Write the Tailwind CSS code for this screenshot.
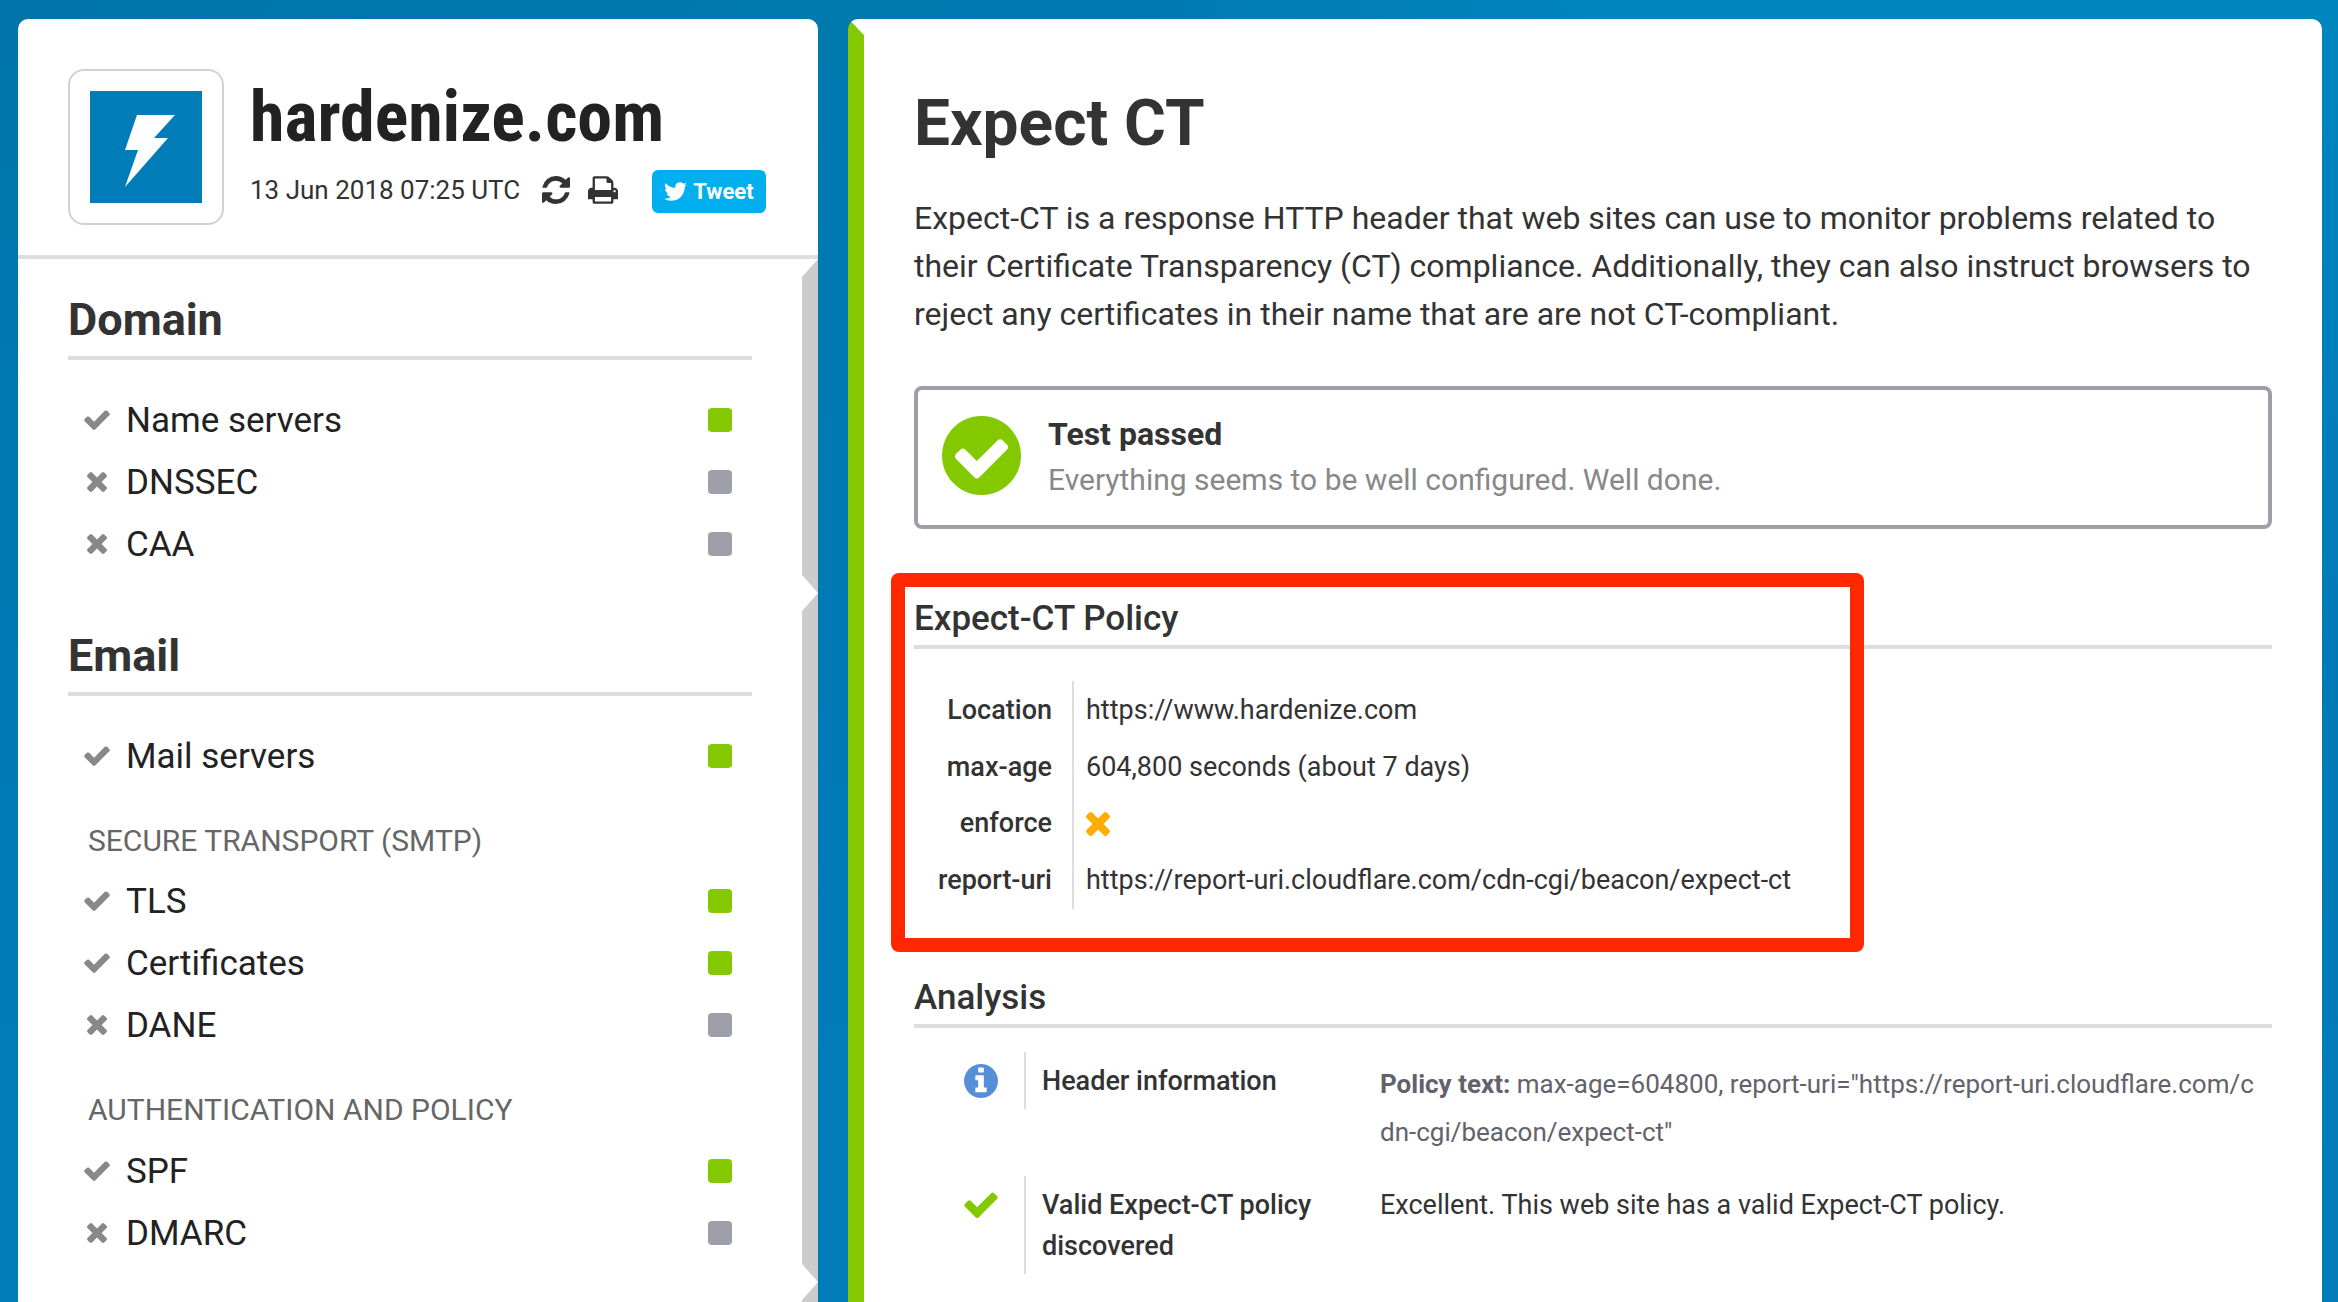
<!DOCTYPE html>
<html lang="en">
<head>
    <meta charset="UTF-8">
    <meta name="viewport" content="width=device-width, initial-scale=1.0">
    <title>hardenize.com - Expect CT</title>
    <script src="https://cdn.jsdelivr.net/npm/@tailwindcss/browser@4"></script>
</head>
<body class="bg-[#007cb8] bg-linear-to-r from-[#0074aa] via-[#007bb1] to-[#0086be] to-70% font-[Roboto,sans-serif] text-[#333]">
    <!-- icon set -->
    <svg class="hidden" aria-hidden="true">
        <symbol id="check" viewBox="121 309 1550 1213"><path d="M1671 566q0 40-28 68l-724 724-136 136q-28 28-68 28t-68-28l-136-136-362-362q-28-28-28-68t28-68l136-136q28-28 68-28t68 28l294 295 656-657q28-28 68-28t68 28l136 136q28 28 28 68z"/></symbol>
        <symbol id="times" viewBox="302 366 1188 1188"><path d="M1490 1322q0 40-28 68l-136 136q-28 28-68 28t-68-28l-294-294-294 294q-28 28-68 28t-68-28l-136-136q-28-28-28-68t28-68l294-294-294-294q-28-28-28-68t28-68l136-136q28-28 68-28t68 28l294 294 294-294q28-28 68-28t68 28l136 136q28 28 28 68t-28 68l-294 294 294 294q28 28 28 68z"/></symbol>
        <symbol id="check-circle" viewBox="128 128 1536 1536"><path d="M1412 734q0-28-18-46l-91-90q-19-19-45-19t-45 19l-408 407-226-226q-19-19-45-19t-45 19l-91 90q-18 18-18 46 0 27 18 45l362 362q19 19 45 19 27 0 46-19l543-543q18-18 18-45zm252 162q0 209-103 385.5t-279.5 279.5-385.5 103-385.5-103-279.5-279.5-103-385.5 103-385.5 279.5-279.5 385.5-103 385.5 103 279.5 279.5 103 385.5z"/></symbol>
        <symbol id="info" viewBox="128 128 1536 1536"><path d="M1152 1376v-160q0-14-9-23t-23-9h-96v-512q0-14-9-23t-23-9h-320q-14 0-23 9t-9 23v160q0 14 9 23t23 9h96v320h-96q-14 0-23 9t-9 23v160q0 14 9 23t23 9h448q14 0 23-9t9-23zm-128-896v-160q0-14-9-23t-23-9h-192q-14 0-23 9t-9 23v160q0 14 9 23t23 9h192q14 0 23-9t9-23zm640 416q0 209-103 385.5t-279.5 279.5-385.5 103-385.5-103-279.5-279.5-103-385.5 103-385.5 279.5-279.5 385.5-103 385.5 103 279.5 279.5 103 385.5z"/></symbol>
        <symbol id="refresh" viewBox="128 128 1536 1536"><path d="M1639 1056q0 5-1 7-64 268-268 434.5t-478 166.5q-146 0-282.5-55t-243.5-157l-129 129q-19 19-45 19t-45-19-19-45v-448q0-26 19-45t45-19h448q26 0 45 19t19 45-19 45l-137 137q71 66 161 102t187 36q134 0 250-65t186-179q11-17 53-117 8-23 30-23h192q13 0 22.5 9.5t9.5 22.5zm25-800v448q0 26-19 45t-45 19h-448q-26 0-45-19t-19-45 19-45l138-138q-148-137-349-137-134 0-250 65t-186 179q-11 17-53 117-8 23-30 23h-199q-13 0-22.5-9.5t-9.5-22.5v-7q65-268 270-434.5t480-166.5q146 0 284 55.5t245 156.5l130-129q19-19 45-19t45 19 19 45z"/></symbol>
        <symbol id="print" viewBox="64 128 1664 1536"><path d="M448 1536h896v-256h-896v256zm0-640h896v-384h-160q-40 0-68-28t-28-68v-160h-640v640zm1152 64q0-26-19-45t-45-19-45 19-19 45 19 45 45 19 45-19 19-45zm128 0v416q0 13-9.5 22.5t-22.5 9.5h-224v160q0 40-28 68t-68 28h-960q-40 0-68-28t-28-68v-160h-224q-13 0-22.5-9.5t-9.5-22.5v-416q0-79 56.5-135.5t135.5-56.5h64v-544q0-40 28-68t68-28h672q40 0 88 20t76 48l152 152q28 28 48 76t20 88v256h64q79 0 135.5 56.5t56.5 135.5z"/></symbol>
        <symbol id="twitter" viewBox="108 256 1576 1280"><path d="M1684 408q-67 98-162 167 1 14 1 42 0 130-38 259.5t-115.5 248.5-184.5 210.5-258 146-323 54.5q-271 0-496-145 35 4 78 4 225 0 401-138-105-2-188-64.5t-114-159.5q33 5 61 5 43 0 85-11-112-23-185.5-111.5t-73.5-205.5v-4q68 38 146 41-66-44-105-115t-39-154q0-88 44-163 121 149 294.5 238.5t371.5 99.5q-8-38-8-74 0-134 94.5-228.5t228.5-94.5q140 0 236 102 109-21 205-78-37 115-142 178 93-10 186-50z"/></symbol>
    </svg>

    <div class="flex min-h-screen gap-[30px] bg-linear-to-b from-transparent via-[#007ab4] to-[#007cb9] pt-[19px] pr-4 pl-[18px]">
        <!-- sidebar -->
        <aside class="flex w-[800px] shrink-0 flex-col rounded-t-[10px] bg-white">
            <header class="flex gap-[26px] border-b-4 border-[#ddd] pt-[50px] pb-[30px] pl-[50px]">
                <div class="size-[156px] rounded-2xl border-2 border-[#d0d0d8] p-5">
                    <svg class="size-full bg-[#007db9]" viewBox="0 0 112 112" fill="#fff"><path d="M47 24H85L64 47H78L35 96L48 59H35Z"/></svg>
                </div>
                <div class="pt-3">
                    <div class="mb-[17px] font-['Roboto_Condensed','Liberation_Sans_Narrow',Roboto,sans-serif] text-[70px] leading-[72px] font-bold text-[#222]">hardenize.com</div>
                    <div class="flex items-start">
                        <div class="flex h-10 items-center">
                            <span class="mr-[22px] text-[26px] leading-10">13 Jun 2018 07:25 UTC</span>
                            <button class="mr-[18px]" aria-label="Refresh"><svg class="size-7 fill-[#333]"><use href="#refresh"/></svg></button>
                            <button class="mr-[34px]" aria-label="Print"><svg class="h-7 w-[30px] fill-[#333]"><use href="#print"/></svg></button>
                        </div>
                        <a href="#" class="flex h-[43px] items-center gap-[6px] rounded-md bg-[#00aff0] px-3 text-[22px] font-bold text-white"><svg class="h-[19px] w-[23px] fill-white"><use href="#twitter"/></svg>Tweet</a>
                    </div>
                </div>
            </header>

            <section class="flex">
                <div class="grow pt-[35px] pr-[50px] pb-[18px] pl-[50px]">
                    <h2 class="mb-[29px] border-b-4 border-[#ddd] pb-[10px] text-[45px] leading-[52px] font-bold">Domain</h2>
                    <ul class="pr-5 pl-4 text-[35px] leading-[60px] text-[#222]">
                        <li class="flex items-center"><svg class="mr-4 h-5 w-[26px] fill-[#888]"><use href="#check"/></svg><a href="#" class="grow pt-0.5">Name servers</a><span class="size-6 rounded bg-[#84c800]"></span></li>
                        <li class="flex items-center"><svg class="mr-4 h-5 w-[26px] fill-[#888]"><use href="#times"/></svg><a href="#" class="grow pt-0.5">DNSSEC</a><span class="size-6 rounded bg-[#9f9faa]"></span></li>
                        <li class="flex items-center"><svg class="mr-4 h-5 w-[26px] fill-[#888]"><use href="#times"/></svg><a href="#" class="grow pt-0.5">CAA</a><span class="size-6 rounded bg-[#9f9faa]"></span></li>
                    </ul>
                </div>
                <div class="w-4 bg-[#ccc] [clip-path:polygon(100%_0,100%_100%,0_calc(100%-18px),0_18px)]"></div>
            </section>

            <section class="flex">
                <div class="grow pt-[37px] pr-[50px] pb-[18px] pl-[50px]">
                    <h2 class="mb-[29px] border-b-4 border-[#ddd] pb-[10px] text-[45px] leading-[52px] font-bold">Email</h2>
                    <ul class="pr-5 pl-4 text-[35px] leading-[60px] text-[#222]">
                        <li class="flex items-center"><svg class="mr-4 h-5 w-[26px] fill-[#888]"><use href="#check"/></svg><a href="#" class="grow pt-0.5">Mail servers</a><span class="size-6 rounded bg-[#84c800]"></span></li>
                    </ul>
                    <h3 class="pt-6 pl-5 text-[30px] leading-[59px] text-[#666] uppercase">Secure Transport (SMTP)</h3>
                    <ul class="pr-5 pl-4 text-[35px] leading-[60px] text-[#222]">
                        <li class="flex items-center"><svg class="mr-4 h-5 w-[26px] fill-[#888]"><use href="#check"/></svg><a href="#" class="grow pt-0.5">TLS</a><span class="size-6 rounded bg-[#84c800]"></span></li>
                        <li class="flex items-center"><svg class="mr-4 h-5 w-[26px] fill-[#888]"><use href="#check"/></svg><a href="#" class="grow pt-0.5">Certificates</a><span class="size-6 rounded bg-[#84c800]"></span></li>
                        <li class="flex items-center"><svg class="mr-4 h-5 w-[26px] fill-[#888]"><use href="#times"/></svg><a href="#" class="grow pt-0.5">DANE</a><span class="size-6 rounded bg-[#9f9faa]"></span></li>
                    </ul>
                    <h3 class="pt-6 pl-5 text-[30px] leading-[60px] text-[#666] uppercase">Authentication and Policy</h3>
                    <ul class="pr-5 pl-4 text-[35px] leading-[60px] text-[#222]">
                        <li class="flex items-center"><svg class="mr-4 h-5 w-[26px] fill-[#888]"><use href="#check"/></svg><a href="#" class="grow pt-0.5">SPF</a><span class="size-6 rounded bg-[#84c800]"></span></li>
                        <li class="flex items-center"><svg class="mr-4 h-5 w-[26px] fill-[#888]"><use href="#times"/></svg><a href="#" class="grow pt-0.5">DMARC</a><span class="size-6 rounded bg-[#9f9faa]"></span></li>
                    </ul>
                </div>
                <div class="w-4 bg-[#ccc] [clip-path:polygon(100%_0,100%_100%,0_calc(100%-18px),0_18px)]"></div>
            </section>

            <section class="flex grow justify-end">
                <div class="w-4 bg-[#ccc] [clip-path:polygon(100%_0,100%_100%,0_100%,0_18px)]"></div>
            </section>
        </aside>

        <!-- report -->
        <main class="min-w-0 grow rounded-t-[10px] border-t-16 border-l-16 border-t-white border-l-[#84c800] bg-white px-[50px] pt-[49px]">
            <h1 class="text-[64px] leading-20 font-bold">Expect CT</h1>
            <p class="mt-[30px] text-[32px] leading-12">Expect-CT is a response HTTP header that web sites can use to monitor problems related to their Certificate Transparency (CT) compliance. Additionally, they can also instruct browsers to reject any certificates in their name that are are not CT-compliant.</p>

            <div class="mt-12 flex items-start gap-[27px] rounded-lg border-4 border-[#9f9faa] px-6 pt-[22px] pb-[23px]">
                <svg class="mt-1 size-[79px] fill-[#84c800]"><use href="#check-circle"/></svg>
                <div class="leading-[45px]">
                    <div class="text-[32px] font-bold">Test passed</div>
                    <div class="text-[30px] text-[#888]">Everything seems to be well configured. Well done.</div>
                </div>
            </div>

            <section class="relative mt-[67px]">
                <h2 class="border-b-4 border-[#ddd] pb-[3px] text-[35px] leading-[46px] font-medium">Expect-CT Policy</h2>
                <table class="mt-8 text-[27px]">
                    <tr class="h-[57px]"><th scope="row" class="w-[159px] border-r-2 border-[#ddd] pt-0.5 pr-5 text-right font-medium">Location</th><td class="pt-0.5 pl-3">https://www.hardenize.com</td></tr>
                    <tr class="h-[57px]"><th scope="row" class="w-[159px] border-r-2 border-[#ddd] pt-0.5 pr-5 text-right font-medium">max-age</th><td class="pt-0.5 pl-3">604,800 seconds (about 7 days)</td></tr>
                    <tr class="h-[57px]"><th scope="row" class="w-[159px] border-r-2 border-[#ddd] pr-5 text-right font-medium">enforce</th><td class="pl-3"><svg class="size-6 fill-[#ffae00]" role="img" aria-label="No"><use href="#times"/></svg></td></tr>
                    <tr class="h-[57px]"><th scope="row" class="w-[159px] border-r-2 border-[#ddd] pr-5 text-right font-medium">report-uri</th><td class="pl-3">https://report-uri.cloudflare.com/cdn-cgi/beacon/expect-ct</td></tr>
                </table>
                <!-- highlight -->
                <div class="pointer-events-none absolute -top-[23px] -left-[23px] h-[379px] w-[973px] overflow-hidden rounded-lg">
                    <div class="size-full border-14 border-[#ff2800]"></div>
                </div>
            </section>

            <section class="mt-[66px]">
                <h2 class="border-b-4 border-[#ddd] pb-[3px] text-[35px] leading-[46px] font-medium">Analysis</h2>
                <div class="mt-6 grid grid-cols-[110px_356px_1fr] items-start gap-y-3 text-[27px] leading-[41px]">
                    <svg class="mt-3 ml-[50px] size-[34px] fill-[#568fd7]"><use href="#info"/></svg>
                    <h3 class="border-l-2 border-[#ddd] pt-[9px] pr-16 pb-[7px] pl-4 font-medium">Header information</h3>
                    <p class="py-2 pr-4 text-[26px] leading-12 break-all text-[#62626c]"><b>Policy text:</b> max-age=604800, report-uri="https://report-uri.cloudflare.com/cdn-cgi/beacon/expect-ct"</p>
                    <svg class="mt-4 ml-[50px] h-[26px] w-[34px] fill-[#84c800]"><use href="#check"/></svg>
                    <h3 class="border-l-2 border-[#ddd] pt-[9px] pr-16 pb-[7px] pl-4 font-medium">Valid Expect-CT policy discovered</h3>
                    <p class="pt-[9px] pb-[7px]">Excellent. This web site has a valid Expect-CT policy.</p>
                </div>
            </section>
        </main>
    </div>
</body>
</html>
